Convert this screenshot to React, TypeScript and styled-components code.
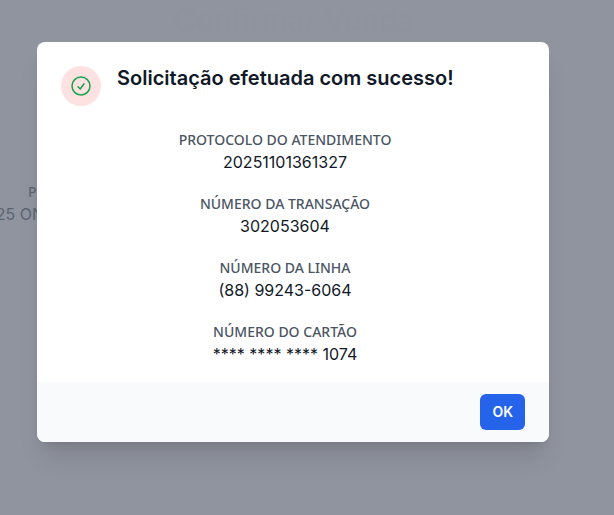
import React from "react";
import styled, { createGlobalStyle } from "styled-components";

const GlobalStyle = createGlobalStyle`
  *, *::before, *::after { box-sizing: border-box; }
  body {
    margin: 0;
    background: #90949f;
    font-family: Inter, "Noto Sans", sans-serif;
    overflow: hidden;
  }
  h1, h2, p, dl, dt, dd { margin: 0; }
`;

const Screen = styled.div`
  position: relative;
  min-height: 100vh;
  overflow: hidden;
`;

const Backdrop = styled.div`
  position: absolute;
  inset: 0;
`;

const PageTitle = styled.h1`
  padding-top: 2px;
  padding-right: 26px;
  text-align: center;
  font-size: 30px;
  line-height: 36px;
  font-weight: 400;
  color: #8f939e;
`;

const PlanSummary = styled.div`
  display: flex;
  flex-direction: column;
  align-items: flex-end;
  width: 44px;
  margin-top: 144px;
  white-space: nowrap;
  color: #5c6574;
`;

const SummaryLabel = styled.span`
  width: 16px;
  font: 500 14px/20px "Noto Sans", sans-serif;
`;

const SummaryValue = styled.span`
  font-size: 16px;
  line-height: 24px;
`;

const Overlay = styled.div`
  position: relative;
  display: flex;
  justify-content: center;
  padding: 42px 65px 32px 37px;
`;

const Dialog = styled.div`
  width: 100%;
  max-width: 512px;
  overflow: hidden;
  border-radius: 8px;
  background: #ffffff;
  box-shadow: 0 20px 25px -5px rgba(0, 0, 0, 0.1), 0 8px 10px -6px rgba(0, 0, 0, 0.1);
`;

const DialogBody = styled.div`
  padding: 24px 24px 16px;
`;

const DialogHeader = styled.header`
  display: flex;
  align-items: flex-start;
  gap: 16px;
`;

const IconCircle = styled.span`
  display: flex;
  flex: none;
  align-items: center;
  justify-content: center;
  width: 40px;
  height: 40px;
  border-radius: 50%;
  background: #fee2e2;
  color: #16a34a;
`;

const DialogTitle = styled.h2`
  font-size: 20px;
  line-height: 24px;
  font-weight: 600;
  color: #111827;
`;

const Details = styled.dl`
  display: flex;
  flex-direction: column;
  gap: 20px;
  margin-top: 24px;
  padding-right: 16px;
  text-align: center;
`;

const DetailLabel = styled.dt`
  font: 500 14px/20px "Noto Sans", sans-serif;
  color: #4b5563;
`;

const DetailValue = styled.dd`
  font-size: 16px;
  line-height: 24px;
  color: #111827;
`;

const DialogFooter = styled.footer`
  display: flex;
  justify-content: flex-end;
  padding: 12px 24px;
  background: #f9fafb;
`;

const ConfirmButton = styled.button`
  height: 36px;
  min-width: 44px;
  padding: 0 12px;
  border: 0;
  border-radius: 6px;
  background: #2563eb;
  color: #ffffff;
  font: 600 14px/20px Inter, sans-serif;
  cursor: pointer;
`;

const details = [
  { label: "PROTOCOLO DO ATENDIMENTO", value: "20251101361327" },
  { label: "NÚMERO DA TRANSAÇÃO", value: "302053604" },
  { label: "NÚMERO DA LINHA", value: "(88) 99243-6064" },
  { label: "NÚMERO DO CARTÃO", value: "**** **** **** 1074" },
];

function CheckCircle() {
  return (
    <svg width="24" height="24" viewBox="0 0 24 24" fill="none" stroke="currentColor" strokeWidth="1.5" strokeLinecap="round" strokeLinejoin="round" aria-hidden="true">
      <path d="M9 12.75 11.25 15 15 9.75M21 12a9 9 0 1 1-18 0 9 9 0 0 1 18 0Z" />
    </svg>
  );
}

export default function App() {
  return (
    <Screen>
      <GlobalStyle />
      <Backdrop aria-hidden="true">
        <PageTitle>Confirmar Venda</PageTitle>
        <PlanSummary>
          <SummaryLabel>P</SummaryLabel>
          <SummaryValue>25 ON</SummaryValue>
        </PlanSummary>
      </Backdrop>
      <Overlay>
        <Dialog role="dialog" aria-modal="true" aria-labelledby="dialog-title">
          <DialogBody>
            <DialogHeader>
              <IconCircle><CheckCircle /></IconCircle>
              <DialogTitle id="dialog-title">Solicitação efetuada com sucesso!</DialogTitle>
            </DialogHeader>
            <Details>
              {details.map(({ label, value }) => (
                <div key={label}>
                  <DetailLabel>{label}</DetailLabel>
                  <DetailValue>{value}</DetailValue>
                </div>
              ))}
            </Details>
          </DialogBody>
          <DialogFooter>
            <ConfirmButton type="button">OK</ConfirmButton>
          </DialogFooter>
        </Dialog>
      </Overlay>
    </Screen>
  );
}
